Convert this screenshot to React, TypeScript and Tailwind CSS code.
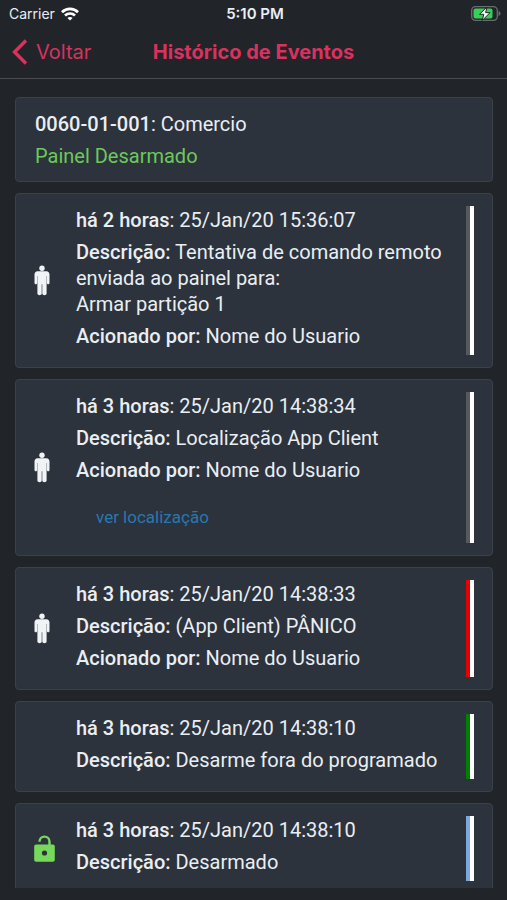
const App = () => {
  return (
    <div className="h-screen flex flex-col bg-[#212529] pb-3 overflow-hidden font-['Roboto',sans-serif] text-[#e9eef3]">
      <StatusBar></StatusBar>
      <header className="grid grid-cols-[1fr_auto_1fr] items-center h-[52px] shrink-0 px-3 pb-0.5 border-b border-[#494c50] font-['Inter',sans-serif] text-[#d9325e]">
        <button className="flex items-center gap-2 text-xl justify-self-start cursor-pointer">
          <svg className="w-4 h-[26px]" viewBox="0 0 16 26" fill="none">
            <path d="M14 1.5 2.5 13 14 24.5" stroke="currentColor" strokeWidth="3.4" />
          </svg>
          Voltar
        </button>
        <h1 className="text-xl font-bold">Histórico de Eventos</h1>
      </header>
      <main className="flex-1 min-h-0 overflow-hidden mt-[18px] pl-[15px] pr-3.5">
        <div className="flex flex-col gap-[11px] text-xl leading-[26px]">
          <section className="flex flex-col gap-1.5 shrink-0 px-[19px] pt-[13px] pb-3 rounded-sm border border-[#3a4148] bg-[#2c333c]">
            <p>
              <strong className="font-medium">0060-01-001</strong>: Comercio
            </p>
            <p className="text-[#6cc95a]">Painel Desarmado</p>
          </section>
          {events.map((event, index) => (
            <EventCard key={index} event={event}></EventCard>
          ))}
        </div>
      </main>
    </div>
  );
};

type Event = {
  when: string;
  date: string;
  description: string[];
  user?: string;
  location?: boolean;
  icon?: "person" | "unlock";
  color: string;
};

const EventCard = ({ event }: { event: Event }) => {
  return (
    <article className="flex shrink-0 pr-[18px] py-3 rounded-sm border border-[#3a4148] bg-[#2c333c]">
      <div className="w-[60px] shrink-0 flex items-center pl-[18px]">
        {event.icon === "person" && <PersonIcon></PersonIcon>}
        {event.icon === "unlock" && <UnlockIcon></UnlockIcon>}
      </div>
      <div className="flex-1 min-w-0 flex flex-col gap-1.5 pr-5 pt-px pb-1.5">
        <p>
          <strong className="font-medium">{event.when}</strong>: {event.date}
        </p>
        <div>
          <p>
            <strong className="font-medium">Descrição:</strong> {event.description[0]}
          </p>
          {event.description[1] && <p>{event.description[1]}</p>}
        </div>
        {event.user && (
          <p>
            <strong className="font-medium">Acionado por:</strong> {event.user}
          </p>
        )}
        {event.location && (
          <button className="self-start h-12 px-5 pt-2 text-[17px] text-[#2878b0] cursor-pointer">
            ver localização
          </button>
        )}
      </div>
      <div className={`w-2 shrink-0 border-l-4 bg-white ${event.color}`}></div>
    </article>
  );
};

const StatusBar = () => {
  return (
    <div className="grid grid-cols-3 items-center h-[27px] shrink-0 pl-[9px] pr-1.5 font-['Inter',sans-serif] text-sm">
      <div className="flex items-center gap-1.5">
        Carrier
        <svg className="w-[18px] h-[14px]" viewBox="0 0 18 14" fill="none" stroke="white" strokeWidth="2.7">
          <path d="M1 5.2C5.4.8 12.6.8 17 5.2" />
          <path d="M4 8.5C6.8 5.8 11.2 5.8 14 8.5" />
          <path d="M9 13.6 6.4 11C7.8 9.7 10.2 9.7 11.6 11Z" fill="white" stroke="none" />
        </svg>
      </div>
      <div className="text-center text-[15px] font-semibold">5:10 PM</div>
      <svg className="w-[30px] h-[15px] justify-self-end" viewBox="0 0 30 15">
        <rect x=".7" y=".7" width="25.6" height="13.6" rx="3.8" fill="none" stroke="#696d70" strokeWidth="1.3" />
        <path d="M27.5 5v5c1.3-.5 2-1.3 2-2.5s-.7-2-2-2.5Z" fill="#696d70" />
        <rect x="2.5" y="2.5" width="19" height="10" rx="2" fill="#34d058" />
        <path d="M16 1 8.5 8.3h4.3L11.2 14.5 19 6.7h-4.4Z" fill="white" stroke="#212529" strokeWidth="1" />
      </svg>
    </div>
  );
};

const PersonIcon = () => {
  return (
    <svg className="w-4 h-[31px]" viewBox="0 0 16 31" fill="#f1f4f6">
      <circle cx="8" cy="3.2" r="2.7" />
      <path d="M3.6 6.2h8.800c1.900 0 3.100 1.300 3.100 3.200v8.600c0 1.800-2.600 1.800-2.600 0v-7h-.3v17.600c0 2.300-4.300 2.300-4.300 0V19.200h-.6v9.400c0 2.300-4.300 2.300-4.300 0V11h-.3v7c0 1.800-2.600 1.800-2.600 0V9.400c0-1.900 1.200-3.200 3.100-3.200Z" />
    </svg>
  );
};

const UnlockIcon = () => {
  return (
    <svg className="w-[22px] h-7" viewBox="0 0 22 28">
      <path d="M5.500 6.800C5.500 3.800 7.700 1.600 10.500 1.600s5 2.200 5 5.200V10" fill="none" stroke="#76d95c" strokeWidth="2.400" />
      <path
        d="M2.200 9.500h16.600c1.200 0 2 .8 2 2v13.300c0 1.200-.8 2-2 2H2.200c-1.200 0-2-.8-2-2V11.500c0-1.200.8-2 2-2Z"
        fill="#76d95c"
      />
      <circle cx="10.500" cy="18" r="2.600" fill="#2c333c" />
    </svg>
  );
};

const events: Event[] = [
  {
    when: "há 2 horas",
    date: "25/Jan/20 15:36:07",
    description: ["Tentativa de comando remoto enviada ao painel para:", "Armar partição 1"],
    user: "Nome do Usuario",
    icon: "person",
    color: "border-[#58595e]",
  },
  {
    when: "há 3 horas",
    date: "25/Jan/20 14:38:34",
    description: ["Localização App Client"],
    user: "Nome do Usuario",
    location: true,
    icon: "person",
    color: "border-[#58595e]",
  },
  {
    when: "há 3 horas",
    date: "25/Jan/20 14:38:33",
    description: ["(App Client) PÂNICO"],
    user: "Nome do Usuario",
    icon: "person",
    color: "border-[#e80000]",
  },
  {
    when: "há 3 horas",
    date: "25/Jan/20 14:38:10",
    description: ["Desarme fora do programado"],
    color: "border-[#008000]",
  },
  {
    when: "há 3 horas",
    date: "25/Jan/20 14:38:10",
    description: ["Desarmado"],
    icon: "unlock",
    color: "border-[#79a9e0]",
  },
];

export default App;
